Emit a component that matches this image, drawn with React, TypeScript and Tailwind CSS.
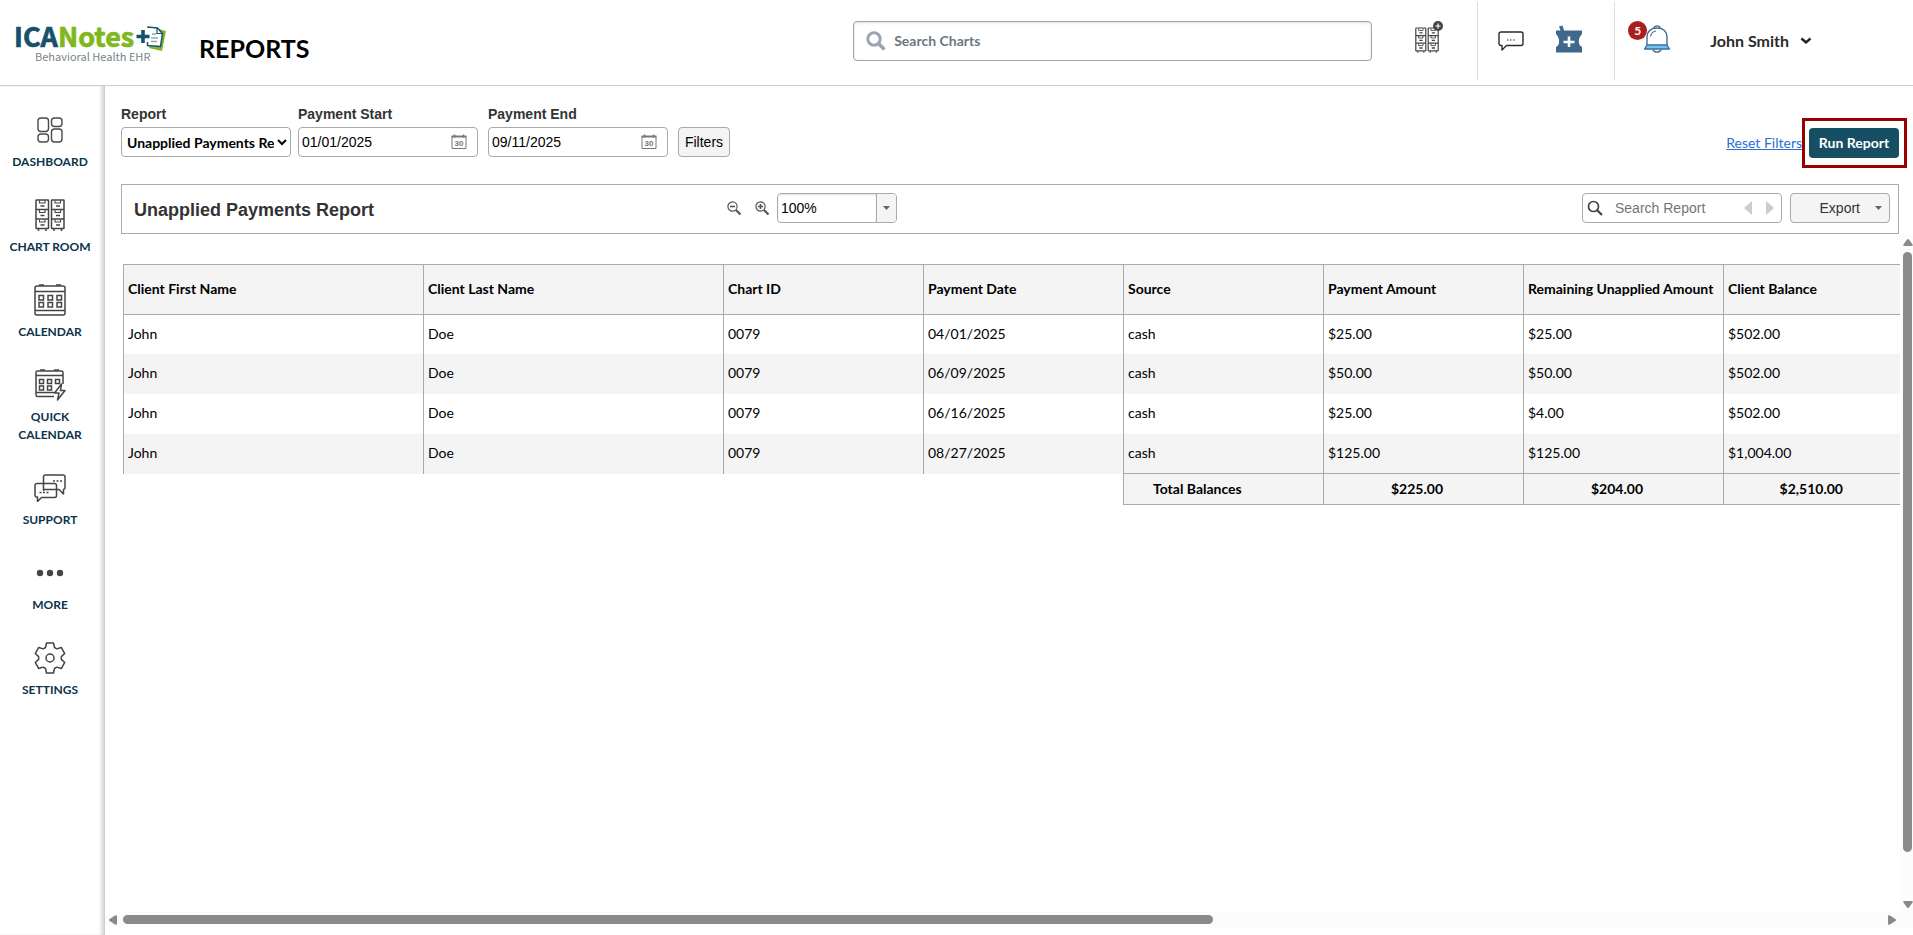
import { useState } from "react";
import type { ReactNode } from "react";

const navItems: { label: string; icon: ReactNode }[] = [
  { label: "DASHBOARD", icon: <DashboardIcon /> },
  { label: "CHART ROOM", icon: <CabinetIcon className="h-8 w-[30px]" /> },
  { label: "CALENDAR", icon: <CalendarIcon /> },
  { label: "QUICK CALENDAR", icon: <QuickCalendarIcon /> },
  { label: "SUPPORT", icon: <SupportIcon /> },
  { label: "MORE", icon: <MoreIcon /> },
  { label: "SETTINGS", icon: <GearIcon /> },
];

const columns = [
  { label: "Client First Name", width: "w-[300px]" },
  { label: "Client Last Name", width: "w-[300px]" },
  { label: "Chart ID", width: "w-[200px]" },
  { label: "Payment Date", width: "w-[200px]" },
  { label: "Source", width: "w-[200px]" },
  { label: "Payment Amount", width: "w-[200px]" },
  { label: "Remaining Unapplied Amount", width: "w-[200px]" },
  { label: "Client Balance", width: "w-[200px]" },
];

const rows = [
  ["John", "Doe", "0079", "04/01/2025", "cash", "$25.00", "$25.00", "$502.00"],
  ["John", "Doe", "0079", "06/09/2025", "cash", "$50.00", "$50.00", "$502.00"],
  ["John", "Doe", "0079", "06/16/2025", "cash", "$25.00", "$4.00", "$502.00"],
  ["John", "Doe", "0079", "08/27/2025", "cash", "$125.00", "$125.00", "$1,004.00"],
];

const totals = ["$225.00", "$204.00", "$2,510.00"];

function Logo() {
  return (
    <svg
      viewBox="0 0 152 42"
      className="h-[42px] w-[152px] overflow-visible"
      role="img"
      aria-label="ICANotes Behavioral Health EHR"
    >
      <text
        x="-1"
        y="25"
        fontFamily="'Noto Sans CJK JP', 'Noto Sans', sans-serif"
        fontWeight="700"
        fontSize="27"
        strokeWidth="0.700"
      >
        <tspan fill="#17506d" stroke="#17506d">ICA</tspan>
        <tspan fill="#80b71c" stroke="#80b71c">Notes</tspan>
      </text>
      <text x="20" y="39" fontFamily="'Noto Sans CJK JP', 'Noto Sans', sans-serif" fontSize="11" fill="#77848c">
        Behavioral Health EHR
      </text>
      <path d="M140 6 151 9 147 29 134 26Z" fill="#80b71c" />
      <path d="M134 4.500 142 5.500 148 11 145.500 25 132 24Z" fill="#fff" />
      <path d="M133 6V5L142.500 6 147.500 11.500 145.500 24.500 132.500 23.500V20" fill="none" stroke="#17506d" strokeWidth="1.500" />
      <path d="M142 6V11.500H147.500" fill="none" stroke="#17506d" strokeWidth="1.200" />
      <path d="M137 12h4M136 16h7M136 19.500h6" stroke="#8fa6b8" strokeWidth="1.300" />
      <path d="M128 8v13M121.500 14.500h13" stroke="#17506d" strokeWidth="3.600" />
    </svg>
  );
}

function DashboardIcon() {
  return (
    <svg viewBox="0 0 26 26" className="h-[26px] w-[26px]" fill="none" stroke="#4a4a4a" strokeWidth="1.400">
      <rect x="1" y="1" width="10.500" height="13.500" rx="3" />
      <rect x="14.500" y="1" width="10.500" height="8.500" rx="3" />
      <rect x="1" y="17" width="10.500" height="8" rx="3" />
      <rect x="14.500" y="12" width="10.500" height="13" rx="3" />
    </svg>
  );
}

function CabinetIcon({ className }: { className: string }) {
  return (
    <svg viewBox="0 0 30 32" className={className} fill="none" stroke="#444" strokeWidth="1.500">
      {[1, 16.5].map((x) => (
        <g key={x} transform={`translate(${x} 0)`}>
          <rect x="0" y="1" width="12.500" height="28.500" rx="0.500" />
          <path d="M0 10.500h12.500M0 20h12.500M2.500 30v2M10 30v2" />
          <path d="M3.500 1.500v2.500h5.500V1.500M3.500 11v2.500h5.500V11M3.500 20.500v2.500h5.500v-2.500" strokeWidth="1.100" />
          <path d="M4.500 7h4M4.500 16.500h4M4.500 26h4" strokeWidth="1.600" />
        </g>
      ))}
    </svg>
  );
}

function CalendarIcon() {
  return (
    <svg viewBox="0 0 32 32" className="h-8 w-8" fill="none" stroke="#444" strokeWidth="1.500">
      <rect x="1" y="2" width="30" height="29" rx="2" />
      <path d="M1 7.500h30M1 26.500h30M5 1h5M22 1h5" />
      {[11.5, 18.5].map((y) =>
        [5, 14, 23].map((x) => <rect key={`${x}-${y}`} x={x} y={y} width="4.500" height="4.500" />)
      )}
    </svg>
  );
}

function QuickCalendarIcon() {
  return (
    <svg viewBox="0 0 32 32" className="h-8 w-8" fill="none" stroke="#444" strokeWidth="1.500">
      <path d="M20 27.500H3.500a1.500 1.500 0 0 1-1.500-1.500V3.500A1.500 1.500 0 0 1 3.500 2h24A1.500 1.500 0 0 1 29 3.500V15" />
      <path d="M2 6.500h27M2 23.500h18M6 1h5M20 1h5" />
      {[10.5, 17].map((y) => [5.5, 13.5].map((x) => <rect key={`${x}-${y}`} x={x} y={y} width="4" height="4" />))}
      <rect x="21.500" y="10.500" width="4" height="4" />
      <path d="M27.500 15 20.500 24h4.500l-1.500 7L31 21.500h-4.500Z" fill="#fff" strokeLinejoin="round" />
    </svg>
  );
}

function SupportIcon() {
  return (
    <svg viewBox="0 0 32 28" className="h-7 w-8" fill="none" stroke="#444" strokeWidth="1.500" strokeLinejoin="round">
      <path d="M9.500 17V3a2 2 0 0 1 2-2H29a2 2 0 0 1 2 2v10.500a2 2 0 0 1-1.500 2V20l-4.500-4.500H9.500" />
      <path d="M3 9.500h17.500a2 2 0 0 1 2 2v10a2 2 0 0 1-2 2H7.500L3.500 27.500V23A2 2 0 0 1 1 21.500v-10a2 2 0 0 1 2-2Z" />
      <path d="M19 7h2M22.500 7h2M26 7h2M5.500 18.500h2M9 18.500h2M12.500 18.500h2" />
    </svg>
  );
}

function MoreIcon() {
  return (
    <svg viewBox="0 0 28 8" className="h-2 w-7" fill="#444">
      <circle cx="4" cy="4" r="3.200" />
      <circle cx="14" cy="4" r="3.200" />
      <circle cx="24" cy="4" r="3.200" />
    </svg>
  );
}

// One tooth outline, repeated every 60 degrees around the hub
const toothPoints = [
  [-4.5, -10.5],
  [-3.5, -15],
  [3.5, -15],
  [4.5, -10.5],
];
const gearPoints = [0, 60, 120, 180, 240, 300]
  .flatMap((deg) => {
    const a = (deg * Math.PI) / 180;
    return toothPoints.map(([x, y]) => {
      const px = 16 + x * Math.cos(a) - y * Math.sin(a);
      const py = 16 + x * Math.sin(a) + y * Math.cos(a);
      return `${px.toFixed(2)},${py.toFixed(2)}`;
    });
  })
  .join(" ");

function GearIcon() {
  return (
    <svg viewBox="0 0 32 32" className="h-8 w-8" fill="none" stroke="#444" strokeWidth="1.500" strokeLinejoin="round">
      <polygon points={gearPoints} />
      <circle cx="16" cy="16" r="4" />
    </svg>
  );
}

function AddChartIcon() {
  return (
    <span className="relative block pt-0.5">
      <CabinetIcon className="h-[26px] w-[24px]" />
      <svg viewBox="0 0 10 10" className="absolute -top-1 -right-1 h-2.5 w-2.5">
        <circle cx="5" cy="5" r="5" fill="#444" />
        <path d="M5 2.500v5M2.500 5h5" stroke="#fff" strokeWidth="1.200" />
      </svg>
    </span>
  );
}

function ChatIcon() {
  return (
    <svg viewBox="0 0 26 20" className="h-5 w-[26px]" fill="none" stroke="#2b2b2b" strokeWidth="1.400" strokeLinejoin="round">
      <path d="M3 1h20a2 2 0 0 1 2 2v9.500a2 2 0 0 1-2 2H8.500L4 19v-4.500H3a2 2 0 0 1-2-2V3a2 2 0 0 1 2-2Z" />
      <path d="M9 9h1.500M12 9h1.500M15 9h1.500" strokeWidth="1" />
    </svg>
  );
}

function MortarIcon() {
  return (
    <svg viewBox="0 0 26 28" className="h-7 w-[26px]">
      <path d="M3 1.500 6.500 0.500 8 5.500H26V9C22.500 13 22 17 24 20.500L26 22V27.500H0V22L2 20.500C4 17 3.500 13 0 9V5.500H4.500Z" fill="#3f688c" />
      <path d="M13 11.500v10.500M7.500 17h11" stroke="#fff" strokeWidth="2.600" />
    </svg>
  );
}

function BellIcon() {
  return (
    <svg viewBox="0 0 28 28" className="h-7 w-7" fill="none" stroke="#3f6f96" strokeWidth="1.400" strokeLinejoin="round">
      <path d="M11 3.500C11 0 17 0 17 3.500" />
      <path d="M4 20V12.500C4 6 8.500 3 14 3s10 3 10 9.500V20" />
      <path d="M4 20h20l2.500 4h-25Z" fill="#6cc8f2" />
      <path d="M7.500 11.500C8 8.500 10 6.500 13 6" strokeWidth="1.200" />
      <path d="M10 24.500c1 3.500 7 3.500 8 0" />
    </svg>
  );
}

function Header() {
  return (
    <header className="flex h-[86px] shrink-0 items-center border-b border-[#ccc] pb-[3px] pl-[15px]">
      <div className="flex items-center pt-1">
        <Logo />
      </div>
      <h1 className="pt-4 pl-8 font-[Lato,sans-serif] text-[25px] font-bold text-black">REPORTS</h1>

      <div className="ml-auto flex items-center">
        <label className="flex h-10 w-[519px] items-center gap-2 rounded border border-[#9aa5b1] pl-3 shadow-[inset_0_1px_3px_#ddd]">
          <svg viewBox="0 0 20 20" className="h-5 w-5" fill="none" stroke="#9aa5b1">
            <circle cx="8" cy="8" r="6.200" strokeWidth="3" />
            <path d="m13 13 5.500 5.500" strokeWidth="3.500" />
          </svg>
          <input
            type="text"
            aria-label="Search Charts"
            placeholder="Search Charts"
            className="flex-1 font-[Lato,sans-serif] text-sm font-bold outline-none placeholder:text-[#6b7680]"
          />
        </label>

        <button type="button" aria-label="Add chart" className="ml-[43px] pb-1">
          <AddChartIcon />
        </button>
        <div className="ml-[38px] flex h-[78px] items-center gap-8 border-x border-[#ddd] pr-8 pl-5">
          <button type="button" aria-label="Messages">
            <ChatIcon />
          </button>
          <button type="button" aria-label="Prescriptions" className="pb-1">
            <MortarIcon />
          </button>
        </div>
        <button type="button" aria-label="5 notifications" className="relative ml-7 pb-1">
          <BellIcon />
          <span className="absolute -top-1 -left-[15px] flex h-[19px] w-[19px] items-center justify-center rounded-full bg-[#a91e1e] font-[Lato,sans-serif] text-xs font-bold text-white">
            5
          </span>
        </button>
        <button
          type="button"
          className="mr-[101px] ml-[39px] flex items-center gap-[11px] font-[Lato,sans-serif] text-base font-bold text-[#2b2b2b]"
        >
          John Smith
          <svg viewBox="0 0 12 8" className="h-2 w-3" fill="none" stroke="#222" strokeWidth="2.400">
            <path d="m1.500 1.500 4.500 4 4.500-4" />
          </svg>
        </button>
      </div>
    </header>
  );
}

function Sidebar() {
  return (
    <nav
      aria-label="Main"
      className="flex w-[105px] shrink-0 flex-col gap-7 border-r border-[#ccc] pt-7 pr-1 shadow-[inset_-4px_0_4px_-2px_#ccc]"
    >
      {navItems.map((item) => (
        <a
          key={item.label}
          href="#"
          className="flex flex-col items-center gap-[7px] text-center font-[Lato,sans-serif] text-xs leading-[18px] font-bold text-[#0b3349]"
        >
          <span className="flex h-8 items-center">{item.icon}</span>
          <span className="w-[90px]">{item.label}</span>
        </a>
      ))}
    </nav>
  );
}

function DateField({ id, label, initial }: { id: string; label: string; initial: string }) {
  const [value, setValue] = useState(initial);
  return (
    <div>
      <label htmlFor={id} className="block text-sm leading-5 font-bold text-[#333]">
        {label}
      </label>
      <div className="mt-[3px] flex h-[30px] w-[180px] items-center rounded border border-[#aaa] pr-2.5 pl-[3px]">
        <input
          id={id}
          type="text"
          value={value}
          onChange={(e) => setValue(e.target.value)}
          className="min-w-0 flex-1 text-sm text-black outline-none"
        />
        <button type="button" aria-label={`Choose ${label}`}>
          <svg viewBox="0 0 16 16" className="h-4 w-4" fill="none" stroke="#777">
            <path d="M1 2.500V14.500H15V2.500" />
            <path d="M0.500 2.500H15.500" strokeWidth="2" />
            <path d="M3.500 0.500v3M12.500 0.500v3" strokeWidth="1.500" />
            <text x="3.500" y="12" fontSize="8" fontWeight="700" fontFamily="'Liberation Sans', Arial, sans-serif" fill="#777" stroke="none">
              30
            </text>
          </svg>
        </button>
      </div>
    </div>
  );
}

function Filters() {
  return (
    <div className="flex items-end">
      <div>
        <label htmlFor="report" className="block text-sm leading-5 font-bold text-[#333]">
          Report
        </label>
        <select
          id="report"
          className="mt-[3px] block h-[30px] w-[170px] rounded border border-[#aaa] bg-white pl-px font-[Lato,sans-serif] text-sm font-bold text-black"
        >
          <option>Unapplied Payments Report</option>
        </select>
      </div>
      <div className="ml-[7px] flex items-end gap-2.5">
        <DateField id="payment-start" label="Payment Start" initial="01/01/2025" />
        <DateField id="payment-end" label="Payment End" initial="09/11/2025" />
        <button type="button" className="h-[30px] w-[52px] rounded border border-[#aaa] bg-[#f4f4f4] text-sm text-black">
          Filters
        </button>
      </div>

      <div className="-mr-2 -mb-[11px] ml-auto flex items-center">
        <a href="#" className="font-[Lato,sans-serif] text-sm text-[#2b6fd6] underline">
          Reset Filters
        </a>
        <div className="border-3 border-[#990000] py-[7px] pr-[5px] pl-1">
          <button
            type="button"
            className="flex h-[30px] w-[90px] items-center justify-center rounded bg-[#164e63] font-[Lato,sans-serif] text-sm font-bold text-white"
          >
            Run Report
          </button>
        </div>
      </div>
    </div>
  );
}

function ZoomIcon({ plus }: { plus?: boolean }) {
  return (
    <svg viewBox="0 0 14 14" className="h-3.5 w-3.5" fill="none" stroke="#555">
      <circle cx="5.500" cy="5.500" r="4.600" strokeWidth="1.200" />
      <path d="m9 9 4.500 4.500" strokeWidth="2.200" />
      <path d={plus ? "M3 5.500h5M5.500 3v5" : "M3 5.500h5"} strokeWidth="1.600" />
    </svg>
  );
}

function Toolbar() {
  const [zoom, setZoom] = useState("100%");
  return (
    <div className="mt-[27px] flex h-[50px] items-center border border-[#aaa] pr-2 pb-0.5 pl-3">
      <h2 className="w-[593px] pt-1 text-lg font-bold text-[#333]">Unapplied Payments Report</h2>
      <div className="flex items-center">
        <button type="button" aria-label="Zoom out">
          <ZoomIcon />
        </button>
        <button type="button" aria-label="Zoom in" className="ml-3.5">
          <ZoomIcon plus />
        </button>
        <div className="ml-2 flex h-[30px] w-[120px] overflow-hidden rounded-sm border border-[#aaa]">
          <input
            type="text"
            aria-label="Zoom level"
            value={zoom}
            onChange={(e) => setZoom(e.target.value)}
            className="min-w-0 flex-1 pl-[3px] text-sm text-black shadow-[inset_0_1px_2px_#ddd] outline-none"
          />
          <button
            type="button"
            aria-label="Zoom presets"
            className="flex w-5 items-center justify-center border-l border-[#aaa] bg-[#f4f4f4]"
          >
            <CaretDown />
          </button>
        </div>
      </div>

      <div className="ml-auto flex items-center gap-2">
        <div className="flex h-[30px] w-[200px] items-center rounded-sm border border-[#aaa] pr-[7px] pl-1">
          <svg viewBox="0 0 16 16" className="h-4 w-4 shrink-0" fill="none" stroke="#444">
            <circle cx="6.500" cy="6.500" r="5" strokeWidth="1.700" />
            <path d="m10 10 5 5" strokeWidth="2.200" />
          </svg>
          <input
            type="text"
            aria-label="Search Report"
            placeholder="Search Report"
            className="min-w-0 flex-1 pl-3 text-sm outline-none placeholder:text-[#757575]"
          />
          <button type="button" aria-label="Previous match">
            <svg viewBox="0 0 8 14" className="h-3.5 w-2" fill="#ccc">
              <path d="M8 0v14L0 7Z" />
            </svg>
          </button>
          <button type="button" aria-label="Next match" className="ml-3.5">
            <svg viewBox="0 0 8 14" className="h-3.5 w-2" fill="#ccc">
              <path d="M0 0v14l8-7Z" />
            </svg>
          </button>
        </div>
        <button
          type="button"
          className="flex h-[30px] w-[100px] items-center justify-end gap-[15px] rounded border border-[#aaa] bg-[#f4f4f4] pr-[7px] text-sm text-[#333]"
        >
          Export
          <CaretDown />
        </button>
      </div>
    </div>
  );
}

function CaretDown() {
  return (
    <svg viewBox="0 0 7 4" className="h-1 w-[7px]" fill="#666">
      <path d="M0 0h7L3.500 4Z" />
    </svg>
  );
}

function ReportTable() {
  return (
    <table className="w-[1800px] table-fixed border-collapse font-[Lato,sans-serif] text-sm text-black">
      <thead>
        <tr className="h-[50px] bg-[#f4f4f4]">
          {columns.map((col) => (
            <th key={col.label} className={`${col.width} border border-[#aaa] px-1 pb-0.5 text-left font-bold whitespace-nowrap`}>
              {col.label}
            </th>
          ))}
        </tr>
      </thead>
      <tbody>
        {rows.map((row) => (
          <tr key={row[3]} className="h-10 first:h-[39px] even:bg-[#f4f4f4]">
            {row.map((cell, i) => (
              <td key={i} className="border-l border-[#aaa] px-1 pb-px">
                {cell}
              </td>
            ))}
          </tr>
        ))}
      </tbody>
      <tfoot>
        <tr className="h-[31px] font-bold">
          <td colSpan={4} />
          <td className="border border-[#aaa] bg-[#f4f4f4] pb-px pl-[29px]">Total Balances</td>
          {totals.map((total) => (
            <td key={total} className="border border-[#aaa] bg-[#f4f4f4] pr-20 pb-px text-right">
              {total}
            </td>
          ))}
        </tr>
      </tfoot>
    </table>
  );
}

function VerticalScrollbar() {
  return (
    <div className="flex w-[13px] shrink-0 flex-col items-center bg-[#fcfcfc] pt-[5px] pb-1 pl-0.5">
      <svg viewBox="0 0 10 7" className="h-[7px] w-[10px]" fill="#8a8a8a">
        <path d="M4 .6Q5-.6 6 .6L9.600 5.500Q10 7 9 7H1Q0 7 .4 5.500Z" />
      </svg>
      <div className="mt-1.5 w-[9px] flex-[600] rounded-full bg-[#8a8a8a]" />
      <div className="flex-[49]" />
      <svg viewBox="0 0 10 7" className="h-[7px] w-[10px]" fill="#8a8a8a">
        <path d="M4 6.400Q5 7.600 6 6.400L9.600 1.500Q10 0 9 0H1Q0 0 .4 1.500Z" />
      </svg>
    </div>
  );
}

function HorizontalScrollbar() {
  return (
    <div className="mb-2 flex h-[15px] items-center bg-[#fcfcfc] pr-[17px] pl-1">
      <svg viewBox="0 0 8 10" className="h-2.5 w-2" fill="#8a8a8a">
        <path d="M.6 4Q-.6 5 .6 6L6 9.600Q8 10 8 9V1Q8 0 6 .4Z" />
      </svg>
      <div className="ml-1.5 h-[9px] flex-[1090] rounded-full bg-[#8a8a8a]" />
      <div className="flex-[675]" />
      <svg viewBox="0 0 8 10" className="h-2.5 w-2" fill="#8a8a8a">
        <path d="M7.400 4Q8.600 5 7.400 6L2 9.600Q0 10 0 9V1Q0 0 2 .4Z" />
      </svg>
    </div>
  );
}

export default function App() {
  return (
    <div className="flex min-h-screen flex-col bg-white font-['Liberation_Sans',Arial,sans-serif]">
      <Header />
      <div className="flex flex-1">
        <Sidebar />
        <main className="flex min-w-0 flex-1 flex-col">
          <div className="pt-[18px] pr-3.5 pl-4">
            <Filters />
            <Toolbar />
          </div>
          <div className="flex flex-1">
            <div className="min-w-0 flex-1 overflow-hidden pt-[30px] pl-[18px]">
              <ReportTable />
            </div>
            <VerticalScrollbar />
          </div>
          <HorizontalScrollbar />
        </main>
      </div>
    </div>
  );
}
